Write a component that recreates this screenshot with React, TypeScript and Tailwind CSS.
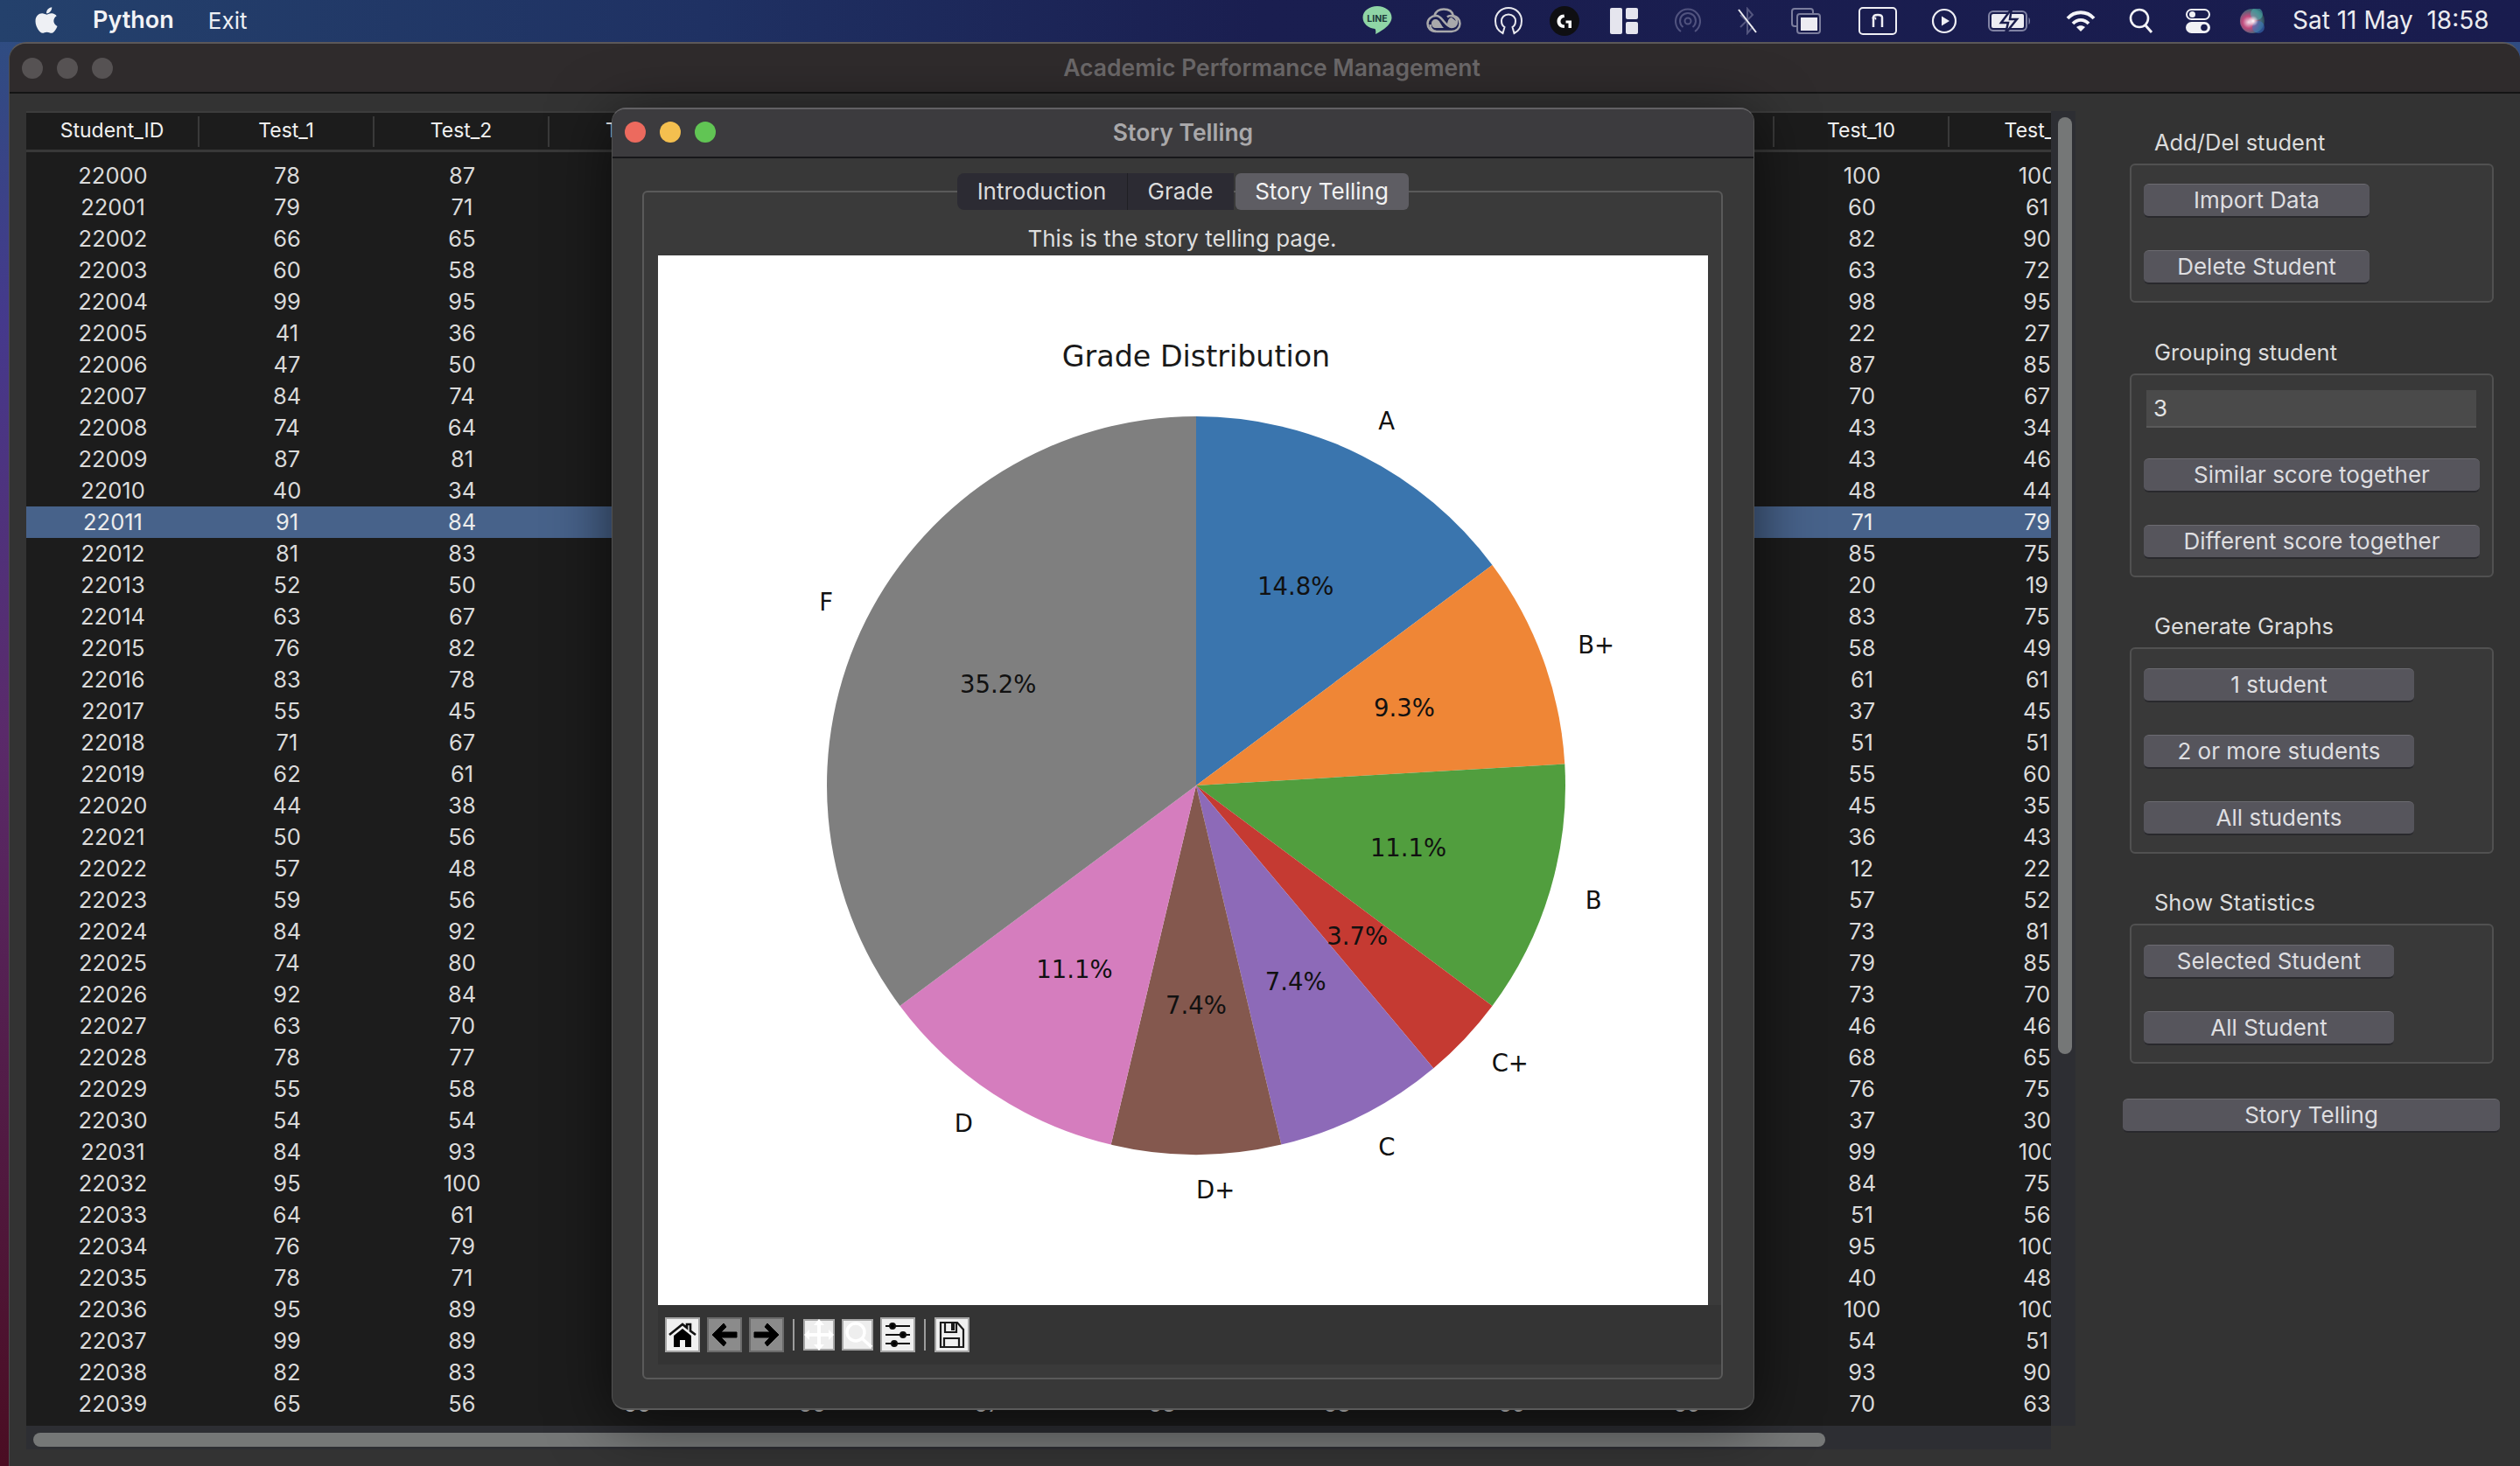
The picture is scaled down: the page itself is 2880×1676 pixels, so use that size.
import React from "react";
import { FaApple } from "react-icons/fa";

const rowsRaw: number[][] = [
  [22000,78,87,100,100],[22001,79,71,60,61],[22002,66,65,82,90],[22003,60,58,63,72],[22004,99,95,98,95],
  [22005,41,36,22,27],[22006,47,50,87,85],[22007,84,74,70,67],[22008,74,64,43,34],[22009,87,81,43,46],
  [22010,40,34,48,44],[22011,91,84,71,79],[22012,81,83,85,75],[22013,52,50,20,19],[22014,63,67,83,75],
  [22015,76,82,58,49],[22016,83,78,61,61],[22017,55,45,37,45],[22018,71,67,51,51],[22019,62,61,55,60],
  [22020,44,38,45,35],[22021,50,56,36,43],[22022,57,48,12,22],[22023,59,56,57,52],[22024,84,92,73,81],
  [22025,74,80,79,85],[22026,92,84,73,70],[22027,63,70,46,46],[22028,78,77,68,65],[22029,55,58,76,75],
  [22030,54,54,37,30],[22031,84,93,99,100],[22032,95,100,84,75],[22033,64,61,51,56],[22034,76,79,95,100],
  [22035,78,71,40,48],[22036,95,89,100,100],[22037,99,89,54,51],[22038,82,83,93,90],[22039,65,56,70,63],
];

const rows = rowsRaw.map(([id, t1, t2, t10, t11]) => {
  const mid = [0, 1, 2, 3, 4, 5, 6].map((i) => Math.min(100, Math.round((t1 * (7 - i) + t10 * (i + 1)) / 8)));
  return [id, t1, t2, ...mid, t10, t11];
});
const headers = ["Student_ID", "Test_1", "Test_2", "Test_3", "Test_4", "Test_5", "Test_6", "Test_7", "Test_8", "Test_9", "Test_10", "Test_11"];

const slices = [
  { label: "A", count: 8, color: "#3a75ae", pct: "14.8%" },
  { label: "B+", count: 5, color: "#ef8636", pct: "9.3%" },
  { label: "B", count: 6, color: "#519e3e", pct: "11.1%" },
  { label: "C+", count: 2, color: "#c53a32", pct: "3.7%" },
  { label: "C", count: 4, color: "#8d6ab8", pct: "7.4%" },
  { label: "D+", count: 4, color: "#84584e", pct: "7.4%" },
  { label: "D", count: 6, color: "#d57dbe", pct: "11.1%" },
  { label: "F", count: 19, color: "#7f7f7f", pct: "35.2%" },
];

function PieChart() {
  const cx = 615, cy = 606, r = 422;
  let acc = 0;
  const pt = (a: number, k: number): [number, number] => [cx + k * Math.sin(a), cy - k * Math.cos(a)];
  return (
    <svg viewBox="0 0 1200 1200" className="block w-[1200px] h-[1200px] bg-white font-['DejaVu_Sans',sans-serif]">
      <text x={615} y={127} textAnchor="middle" fontSize={33.3} fill="#1a1a1a">Grade Distribution</text>
      {slices.map((s) => {
        const a0 = (acc / 54) * Math.PI * 2;
        acc += s.count;
        const a1 = (acc / 54) * Math.PI * 2;
        const [x0, y0] = pt(a0, r);
        const [x1, y1] = pt(a1, r);
        const large = a1 - a0 > Math.PI ? 1 : 0;
        return <path key={s.label} d={`M${cx} ${cy}L${x0} ${y0}A${r} ${r} 0 ${large} 1 ${x1} ${y1}Z`} fill={s.color} />;
      })}
      {(() => {
        let c = 0;
        return slices.map((s) => {
          const am = ((c + s.count / 2) / 54) * Math.PI * 2;
          c += s.count;
          const [lx, ly] = pt(am, r * 1.1);
          const [px, py] = pt(am, r * 0.6);
          return (
            <g key={s.label} fontSize={27.5} fill="#111">
              <text x={lx} y={ly + 8} textAnchor={Math.sin(am) >= 0 ? "start" : "end"}>{s.label}</text>
              <text x={px} y={py + 8} textAnchor="middle">{s.pct}</text>
            </g>
          );
        });
      })()}
    </svg>
  );
}

function Btn({ w, children }: { w: string; children: React.ReactNode }) {
  return (
    <div className={`${w} h-[39px] shrink-0 flex items-center justify-center rounded-[6px] bg-[#56555c] border-t border-t-[#6c6b71] border-b-2 border-b-[#29292d] pb-[1px] text-[26px] text-[#dedee0]`}>
      {children}
    </div>
  );
}

function Label({ children }: { children: React.ReactNode }) {
  return <div className="h-[32px] leading-[30px] mb-[7px] ml-[36px] text-[25.500px] text-[#dcdcdc]">{children}</div>;
}

function ToolBtn({ dim, children }: { dim?: boolean; children: React.ReactNode }) {
  return (
    <div className={`w-[40px] h-[40px] border-2 flex items-center justify-center ${dim ? "bg-[#8b8b8b] border-[#6b6b6b]" : "bg-[#f0f0f0] border-[#a6a6a6]"}`}>
      {children}
    </div>
  );
}

function MenuIcons() {
  return (
    <div className="flex items-center pr-[38px] text-white">
      {/* LINE */}
      <svg width="34" height="36" viewBox="0 0 34 36">
        <path d="M17 1C8 1 .5 6.500 .5 14c0 7 6.500 12.500 14 13 1 2 1 4 .5 6 6-3 18.500-10 18.500-19C33.500 6.500 26 1 17 1Z" fill="#8fd5a6" />
        <text x="17" y="18.500" textAnchor="middle" fontSize="10.500" fontWeight="700" fill="#1c3a38" fontFamily="Inter, sans-serif">LINE</text>
      </svg>
      {/* Creative Cloud */}
      <svg className="ml-[39px]" width="40" height="30" viewBox="0 0 40 30" fill="none">
        <path d="M11 27C5 27 1.500 23 1.500 18S6 9 11 9c5 0 7 4 9 6.500S25 22 29 22c3 0 6-2 6-6s-3-7-7-7c-1.500 0-3 .5-4 1.500" stroke="#a9a9ab" strokeWidth="2.500" />
        <path d="M9.500 8.500C11 4 15 1.500 20 1.500c6 0 10 3 11 7.500 4 1 7.500 4 7.500 9 0 5-4 9-9.500 9H12c-5 0-7.500-4-7.500-8" stroke="#a9a9ab" strokeWidth="2.500" />
        <path d="M11 13c-3 0-5 2-5 5s2 5 5 5h9c-3-3-5-10-9-10Zm13 5c1 2 3 4 5 4 3 0 6-2 6-6l-6-5c-3 0-4 3-5 7Z" fill="#a9a9ab" />
      </svg>
      {/* Headset ring */}
      <svg className="ml-[38px]" width="32" height="32" viewBox="0 0 32 32" fill="none" stroke="#e8e8ee" strokeWidth="2">
        <path d="M9.500 30C4.500 27.500 1 22.500 1 16 1 7.500 7.500 1 16 1s15 6.500 15 15c0 6.500-3.500 11.500-8.500 14l-2-7c2.500-1.500 3.500-4 3.500-7 0-4-3-7.500-8-7.500S8 12 8 16c0 3 1 5.500 3.500 7Z" />
      </svg>
      {/* Logitech G */}
      <svg className="ml-[31px]" width="34" height="34" viewBox="0 0 34 34">
        <circle cx="17" cy="17" r="17" fill="#0f0f12" />
        <path d="M16.500 9.500C12 9.500 8.500 13 8.500 17.500s3.500 7.500 8 7.500c.5 0 .5 0 .5-3.500-2.500 0-4.500-1.500-4.500-4s2-4.500 4.500-4.500Z M18.500 16.500H25V25H21.500V19.500H18.500Z" fill="#fff" />
      </svg>
      {/* Layout */}
      <svg className="ml-[35px]" width="32" height="30" viewBox="0 0 32 30" fill="#e5e5ee">
        <rect x="0" y="0" width="14" height="30" rx="2" />
        <rect x="18" y="0" width="14" height="13" rx="2" />
        <rect x="18" y="16" width="14" height="14" rx="2" />
      </svg>
      {/* Airdrop */}
      <svg className="ml-[42px]" width="30" height="30" viewBox="0 0 30 30" fill="none" stroke="#51537f" strokeWidth="2">
        <path d="M7 27A14 14 0 1 1 23 27" />
        <path d="M9.500 22A9 9 0 1 1 20.500 22" />
        <circle cx="15" cy="15" r="3.500" />
      </svg>
      {/* Bluetooth off */}
      <svg className="ml-[41px]" width="24" height="32" viewBox="0 0 24 32" fill="none">
        <path d="M4 9l14 14-6 7V2l6 7L4 23" stroke="#54567f" strokeWidth="2" />
        <path d="M2 3L22 29" stroke="#eeeef2" strokeWidth="2" />
      </svg>
      {/* Windows */}
      <svg className="ml-[38px]" width="34" height="30" viewBox="0 0 34 30" fill="none">
        <rect x="1" y="1" width="24" height="20" rx="3" stroke="#7b7d9d" strokeWidth="2" />
        <rect x="7" y="7" width="26" height="22" rx="3" fill="#1a1d4d" stroke="#7b7d9d" strokeWidth="2" />
        <rect x="11" y="11" width="19" height="15" fill="#ececf2" />
      </svg>
      {/* n box */}
      <svg className="ml-[43px]" width="44" height="32" viewBox="0 0 44 32" fill="none" stroke="#efeff4" strokeWidth="2">
        <rect x="1" y="1" width="42" height="30" rx="4" />
        <path d="M17 23V12c0-2 2-3 5-3s5 1 5 3v11" strokeWidth="2.500" />
        <path d="M15.500 12.500h4v2" strokeWidth="1.500" />
      </svg>
      {/* Play */}
      <svg className="ml-[39px]" width="30" height="30" viewBox="0 0 30 30" fill="none">
        <circle cx="15" cy="15" r="13" stroke="#efeff4" strokeWidth="2.200" />
        <path d="M12 9.500L21 15l-9 5.500Z" fill="#efeff4" />
      </svg>
      {/* Battery */}
      <svg className="ml-[35px]" width="50" height="28" viewBox="0 0 50 28" fill="none">
        <rect x="1" y="3" width="43" height="22" rx="5" stroke="#8183a4" strokeWidth="2" />
        <path d="M46.500 10c2 1 2 7 0 8Z" fill="#8183a4" />
        <rect x="4" y="6" width="37" height="16" rx="2" fill="#ececf2" />
        <path d="M27 0 15 16h8l-3 12 13-16h-8Z" fill="#ececf2" stroke="#1a1d4d" strokeWidth="2.500" />
      </svg>
      {/* WiFi */}
      <svg className="ml-[39px]" width="34" height="26" viewBox="0 0 34 26" fill="none" stroke="#f4f4f8" strokeWidth="3.800">
        <path d="M2 10C10 1 24 1 32 10" />
        <path d="M8 16C13 10.500 21 10.500 26 16" />
        <path d="M17 25l-5-5c3-2.500 7-2.500 10 0Z" fill="#f4f4f8" stroke="none" />
      </svg>
      {/* Search */}
      <svg className="ml-[38px]" width="28" height="30" viewBox="0 0 28 30" fill="none" stroke="#f4f4f8" strokeWidth="2.600">
        <circle cx="12" cy="12" r="10" />
        <path d="M19 20l7 8" strokeWidth="3" />
      </svg>
      {/* Control center */}
      <svg className="ml-[37px]" width="28" height="28" viewBox="0 0 28 28">
        <rect x="1" y="1" width="26" height="11" rx="5.500" fill="none" stroke="#f1f1f5" strokeWidth="2" />
        <circle cx="7.500" cy="6.500" r="3.500" fill="#f1f1f5" />
        <rect x="0" y="15" width="28" height="13" rx="6.500" fill="#f1f1f5" />
        <circle cx="21" cy="21.500" r="3.800" fill="#1a1d4d" />
      </svg>
      {/* Siri */}
      <svg className="ml-[34px]" width="28" height="28" viewBox="0 0 28 28">
        <defs>
          <radialGradient id="siriA" cx="0.35" cy="0.55" r="0.7">
            <stop offset="0" stopColor="#f1d8e6" />
            <stop offset="0.35" stopColor="#c04a7c" />
            <stop offset="0.75" stopColor="#3f6a78" />
            <stop offset="1" stopColor="#2a3a4a" />
          </radialGradient>
          <radialGradient id="siriB" cx="0.5" cy="0.5" r="0.5">
            <stop offset="0" stopColor="#ffffff" />
            <stop offset="1" stopColor="#ffffff" stopOpacity="0" />
          </radialGradient>
        </defs>
        <circle cx="14" cy="14" r="14" fill="url(#siriA)" />
        <circle cx="19" cy="6" r="7" fill="#4fb6b0" opacity="0.55" />
        <circle cx="21" cy="21" r="7" fill="#3d78c4" opacity="0.55" />
        <circle cx="15" cy="14" r="6" fill="url(#siriB)" />
      </svg>
      <div className="ml-[32px] w-[222px] text-[28px] text-[#ececf0] whitespace-pre -mt-[2px]">Sat 11 May  18:58</div>
    </div>
  );
}

function Table() {
  return (
    <div className="w-[2314px] h-[1503px] bg-[#1c1c1c] overflow-hidden">
      <div className="flex w-[2400px] h-[47px] items-center border-t-2 border-t-[#3c3c3c] border-b-[3px] border-b-[#383838]">
        {headers.map((h, i) => (
          <div key={h} className={`${i === 0 ? "w-[198px]" : "w-[200px]"} h-[35px] leading-[32px] text-center text-[23px] text-[#f0f0f0] border-r-2 border-r-[#3a3a3a] shrink-0`}>
            {h}
          </div>
        ))}
      </div>
      <div className="pt-[9px]">
        {rows.map((r) => (
          <div key={r[0]} className={`flex w-[2400px] h-[36px] leading-[36px] text-[25.500px] ${r[0] === 22011 ? "bg-[#47628a] text-[#ececec]" : "text-[#dadada]"}`}>
            {r.map((v, i) => (
              <div key={i} className={`${i === 0 ? "w-[198px]" : "w-[200px]"} text-center shrink-0`}>{v}</div>
            ))}
          </div>
        ))}
      </div>
    </div>
  );
}

function SidePanel() {
  return (
    <div className="ml-[54px] pt-[21px] w-[431px] shrink-0">
      <Label>Add/Del student</Label>
      <div className="ml-[8px] w-[416px] border-2 border-[#515151] rounded-[6px] bg-[#393939] pl-[14px] pt-[21px] pb-[19px] flex flex-col gap-[37px]">
        <Btn w="w-[258px]">Import Data</Btn>
        <Btn w="w-[258px]">Delete Student</Btn>
      </div>
      <div className="mt-[42px]"><Label>Grouping student</Label></div>
      <div className="ml-[8px] w-[416px] border-2 border-[#515151] rounded-[6px] bg-[#393939] pl-[14px] pt-[17px] pb-[19px] flex flex-col">
        <div className="ml-[3px] w-[377px] h-[43px] bg-[#4a4a4a] border-b-2 border-b-[#5a5a5a] pl-[8px] leading-[41px] text-[26px] text-[#e4e4e4]">3</div>
        <div className="mt-[35px]"><Btn w="w-[384px]">Similar score together</Btn></div>
        <div className="mt-[37px]"><Btn w="w-[384px]">Different score together</Btn></div>
      </div>
      <div className="mt-[41px]"><Label>Generate Graphs</Label></div>
      <div className="ml-[8px] w-[416px] border-2 border-[#515151] rounded-[6px] bg-[#393939] pl-[14px] pt-[22px] pb-[19px] flex flex-col gap-[37px]">
        <Btn w="w-[309px]">1 student</Btn>
        <Btn w="w-[309px]">2 or more students</Btn>
        <Btn w="w-[309px]">All students</Btn>
      </div>
      <div className="mt-[41px]"><Label>Show Statistics</Label></div>
      <div className="ml-[8px] w-[416px] border-2 border-[#515151] rounded-[6px] bg-[#393939] pl-[14px] pt-[22px] pb-[19px] flex flex-col gap-[37px]">
        <Btn w="w-[286px]">Selected Student</Btn>
        <Btn w="w-[286px]">All Student</Btn>
      </div>
      <div className="mt-[40px]"><Btn w="w-[431px]">Story Telling</Btn></div>
    </div>
  );
}

function Toolbar() {
  return (
    <div className="h-[68px] bg-[#343434] flex items-center pl-[8px]">
      <div className="flex items-center gap-[8px]">
        <ToolBtn>
          <svg width="32" height="30" viewBox="0 0 32 30">
            <path d="M1 15 16 3l5 4V3h4v7.500L31 15" fill="none" stroke="#111" strokeWidth="2.600" />
            <path d="M6 16 16 8l10 8v13h-7v-8h-6v8H6Z" fill="#000" />
          </svg>
        </ToolBtn>
        <ToolBtn dim>
          <svg width="34" height="32" viewBox="0 0 34 32">
            <path d="M16 3 3 16l13 13 3-4-6-6h18v-6H13l6-6Z" fill="#000" stroke="#000" strokeWidth="1" strokeLinejoin="round" />
          </svg>
        </ToolBtn>
        <ToolBtn dim>
          <svg width="34" height="32" viewBox="0 0 34 32">
            <path d="M18 3 31 16 18 29l-3-4 6-6H3v-6h18l-6-6Z" fill="#000" stroke="#000" strokeWidth="1" strokeLinejoin="round" />
          </svg>
        </ToolBtn>
      </div>
      <div className="ml-[10px] w-[2px] h-[36px] bg-[#9c9c9c]" />
      <div className="ml-[10px] w-[36px] h-[36px] border-2 border-[#a6a6a6] bg-[#eeeeee] flex items-center justify-center">
        <svg width="36" height="36" viewBox="0 0 36 36" className="shrink-0">
          <path d="M18 0l6 7h-4v9h9v-4l6 6-6 6v-4h-9v9h4l-6 7-6-7h4v-9H7v4l-6-6 6-6v4h9V7h-4Z" fill="#ffffff" />
        </svg>
      </div>
      <div className="ml-[8px] w-[36px] h-[36px] border-2 border-[#a6a6a6] bg-[#eeeeee] flex items-center justify-center">
        <svg width="34" height="34" viewBox="0 0 34 34" className="shrink-0" fill="none" stroke="#ffffff" strokeWidth="3.500">
          <circle cx="15" cy="14" r="10" />
          <path d="M22 21l11 10" />
        </svg>
      </div>
      <div className="ml-[8px]">
        <ToolBtn>
          <svg width="30" height="30" viewBox="0 0 30 30" stroke="#111" strokeWidth="2" fill="#000">
            <path d="M1 5h28M1 15h28M1 25h28" />
            <circle cx="9" cy="5" r="3" />
            <circle cx="21" cy="15" r="3" />
            <circle cx="11" cy="25" r="3" />
          </svg>
        </ToolBtn>
      </div>
      <div className="ml-[10px] w-[2px] h-[36px] bg-[#9c9c9c]" />
      <div className="ml-[10px]">
        <ToolBtn>
          <svg width="30" height="32" viewBox="0 0 30 32" fill="none" stroke="#1a1a1a" strokeWidth="2.200">
            <path d="M2 2h19l7 8v20H2Z" />
            <path d="M7 2v11h13V2" />
            <rect x="14" y="3" width="4" height="8" fill="#1a1a1a" stroke="none" />
            <path d="M6 30V20h17v10" />
          </svg>
        </ToolBtn>
      </div>
    </div>
  );
}

function Dialog() {
  return (
    <div className="absolute left-[699px] top-[123px] w-[1306px] h-[1489px] rounded-[16px] bg-[#383838] border-t-2 border-t-[#626164] border-b-2 border-b-[#5a5a5a] border-x border-x-[#505050] shadow-[0_12px_70px_rgba(0,0,0,0.6)] overflow-hidden">
      <div className="relative h-[56px] bg-[#3c3b3e] border-b-2 border-b-[#17171a] flex items-center justify-center text-[26.500px] font-semibold text-[#a9a8aa]">
        <div className="absolute left-[14px] top-[14px] flex gap-[16px]">
          <div className="w-[24px] h-[24px] rounded-full bg-[#ec6a5e]" />
          <div className="w-[24px] h-[24px] rounded-full bg-[#f4bf4f]" />
          <div className="w-[24px] h-[24px] rounded-full bg-[#61c554]" />
        </div>
        Story Telling
      </div>
      <div className="pl-[34px] pt-[17px]">
        <div className="relative z-10 flex justify-center w-[1235px] h-[42px] text-[26px] leading-[41px]">
          <div className="w-[195px] bg-[#2c2b33] rounded-l-[8px] text-center text-[#dcdcdc] border-r border-r-[#1f1f24]">Introduction</div>
          <div className="w-[121px] bg-[#2c2b33] text-center text-[#dcdcdc]">Grade</div>
          <div className="ml-[2px] w-[198px] bg-[#5e5d63] rounded-[6px] text-center text-[#f2f2f2]">Story Telling</div>
        </div>
        <div className="-mt-[22px] w-[1235px] h-[1359px] border-2 border-[#5a5a5a] rounded-[6px] bg-[#3a3a3a] pl-[16px] pt-[37px]">
          <div className="h-[35px] leading-[31px] text-center w-[1198px] text-[26px] text-[#dedede]">This is the story telling page.</div>
          <PieChart />
          <Toolbar />
        </div>
      </div>
    </div>
  );
}

export default function App() {
  return (
    <div className="relative w-[2880px] h-[1676px] overflow-hidden font-['Inter','Liberation_Sans',sans-serif] bg-[linear-gradient(180deg,#2c4f80_0%,#45398c_22%,#5a2a6a_50%,#4a0d22_100%)]">
      <div className="h-[48px] flex items-center justify-between bg-[linear-gradient(90deg,#24416c_0%,#1f3163_28%,#1a1e50_50%,#191c4e_100%)]">
        <div className="flex items-center text-white">
          <FaApple className="ml-[38px] w-[30px] h-[34px] text-[#eef0f4] -mt-[3px]" />
          <div className="ml-[38px] text-[27px] font-semibold text-[#f2f3f6] -mt-[2px]">Python</div>
          <div className="ml-[39px] text-[26px] text-[#eef0f4] -mt-[2px]">Exit</div>
        </div>
        <MenuIcons />
      </div>
      <div className="ml-[10px] w-[2870px] h-[1628px] rounded-t-[20px] border-t-2 border-t-[#5c5858] border-l border-l-[#4e4e4e] bg-[#333333] overflow-hidden">
        <div className="relative h-[57px] bg-[#2f2b2c] border-b-2 border-b-[#141414] flex items-center">
          <div className="absolute left-[14px] top-[16px] flex gap-[16px]">
            <div className="w-[24px] h-[24px] rounded-full bg-[#565253]" />
            <div className="w-[24px] h-[24px] rounded-full bg-[#565253]" />
            <div className="w-[24px] h-[24px] rounded-full bg-[#565253]" />
          </div>
          <div className="w-[2869px] shrink-0 pl-[16px] text-center text-[26.500px] font-semibold text-[#6b6869]">Academic Performance Management</div>
        </div>
        <div className="flex pl-[19px] pt-[20px]">
          <div className="grid grid-cols-[2314px_28px] grid-rows-[1503px_27px] shrink-0">
            <Table />
            <div className="bg-[#2d2e33] pl-[8px] pt-[7px]">
              <div className="w-[16px] h-[1071px] rounded-full bg-[#757777]" />
            </div>
            <div className="bg-[#2d2e33] pl-[8px] pt-[8px]">
              <div className="w-[2048px] h-[16px] rounded-full bg-[#757777]" />
            </div>
            <div />
          </div>
          <SidePanel />
        </div>
      </div>
      <Dialog />
    </div>
  );
}
